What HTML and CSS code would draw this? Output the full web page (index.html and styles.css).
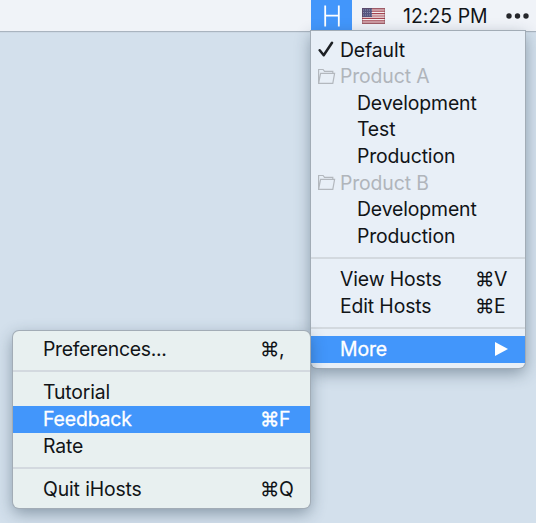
FILE: index.html
```
<!DOCTYPE html>
<html lang="en">
<head>
<meta charset="utf-8">
<title>iHosts</title>
<link rel="stylesheet" href="styles.css">
</head>
<body>
<header class="bar">
  <div class="app"><svg width="16" height="22" viewBox="0 0 16 22"><path d="M1.200 .5v21M14.800 .5v21M1.200 10.700h13.600" fill="none" stroke="#fff" stroke-width="1.800"/></svg></div>
  <svg class="flag" width="23" height="16" viewBox="0 0 23 16">
    <path fill="#f4eef0" d="M0 0h23v16H0z"/>
    <path d="M0 .8h23M0 3.200h23M0 5.600h23M0 8h23M0 10.400h23M0 12.800h23M0 15.200h23" stroke="#a34450" stroke-width="1.200"/>
    <path fill="#55557f" d="M0 0h10v9H0z"/>
    <path d="M1 2h9M1 4.500h9M1 7h9" stroke="#9c9cb9" stroke-width=".8" stroke-dasharray="1 1"/>
    <path d="M.4 .4h22.200v15.200H.4z" fill="none" stroke="#6c3543" stroke-opacity=".45" stroke-width=".8"/>
  </svg>
  <time class="clock">12:25 PM</time>
  <svg class="dots" width="24" height="6" viewBox="0 0 24 6" fill="#25272b"><circle cx="3" cy="3" r="2.700"/><circle cx="11.500" cy="3" r="2.700"/><circle cx="20" cy="3" r="2.700"/></svg>
</header>
<nav class="menu main">
  <div class="row"><svg class="lead" width="20" height="20" viewBox="0 0 20 20"><path d="M1.700 10.300l4 5L14 2.800" fill="none" stroke="#1d2024" stroke-width="2.500" stroke-linecap="round" stroke-linejoin="round"/></svg><span class="label">Default</span></div>
  <div class="row off"><svg class="lead" width="20" height="20" viewBox="0 0 20 20"><path d="M.6 16.400V2.500H5.100L6.500 4.300H14.800V6.300M.6 16.400L2.600 6.300H16.600L14.800 16.400Z" fill="none" stroke="#b3b8be" stroke-width="1.200"/></svg><span class="label">Product A</span></div>
  <div class="row sub"><span class="label">Development</span></div>
  <div class="row sub"><span class="label">Test</span></div>
  <div class="row sub"><span class="label">Production</span></div>
  <div class="row off"><svg class="lead" width="20" height="20" viewBox="0 0 20 20"><path d="M.6 16.400V2.500H5.100L6.500 4.300H14.800V6.300M.6 16.400L2.600 6.300H16.600L14.800 16.400Z" fill="none" stroke="#b3b8be" stroke-width="1.200"/></svg><span class="label">Product B</span></div>
  <div class="row sub"><span class="label">Development</span></div>
  <div class="row sub"><span class="label">Production</span></div>
  <div class="sep"></div>
  <div class="row"><span class="label">View Hosts</span><kbd><span class="cmd">⌘</span>V</kbd></div>
  <div class="row"><span class="label">Edit Hosts</span><kbd><span class="cmd">⌘</span>E</kbd></div>
  <div class="sep"></div>
  <div class="row on"><span class="label">More</span><svg class="arrow" width="13" height="14" viewBox="0 0 13 14"><path d="M0 0l13 7L0 14z" fill="#fff"/></svg></div>
</nav>
<nav class="menu more">
  <div class="row"><span class="label dotted">Preferences...</span><kbd><span class="cmd">⌘</span>,</kbd></div>
  <div class="sep"></div>
  <div class="row"><span class="label">Tutorial</span></div>
  <div class="row on"><span class="label">Feedback</span><kbd><span class="cmd">⌘</span>F</kbd></div>
  <div class="row"><span class="label">Rate</span></div>
  <div class="sep"></div>
  <div class="row"><span class="label">Quit iHosts</span><kbd><span class="cmd">⌘</span>Q</kbd></div>
</nav>
</body>
</html>
```
FILE: styles.css
```
* { box-sizing: border-box; }
body {
  margin: 0;
  height: 523px;
  overflow: hidden;
  position: relative;
  background: #d3e0ec;
  font: 19.4px/26.6px Inter, "Liberation Sans", sans-serif;
  letter-spacing: -.13px;
  color: #111417;
}
.bar {
  height: 31px;
  display: flex;
  align-items: center;
  padding-left: 311px;
  background: #f0f3f8;
  box-shadow: 0 1px 1px #a9b4bf;
}
.app {
  width: 41px;
  height: 31px;
  display: flex;
  align-items: center;
  justify-content: center;
  background: #4296fb;
}
.flag { margin-left: 10px; }
.clock { width: 87px; margin-left: 18px; padding-top: 1px; white-space: nowrap; letter-spacing: .05px; }
.dots { margin-left: 16px; flex: none; }
.menu {
  position: absolute;
  padding: 5.7px 0 0;
  box-shadow: 0 0 0 1px #a2acb6, 0 5px 16px rgba(40, 60, 80, .46);
}
.main {
  left: 311px;
  top: 31px;
  width: 214px;
  height: 337px;
  background: #e8eff7;
  border-radius: 0 0 6px 6px;
}
.more {
  left: 13px;
  top: 330.500px;
  width: 297px;
  height: 177.500px;
  background: #e8f0f0;
  border-radius: 6px;
}
.row {
  height: 26.6px;
  display: flex;
  align-items: center;
  position: relative;
  padding-left: 29px;
}
.more .row { padding-left: 30px; }
.main .sub { padding-left: 46px; }
.label { flex: 1; white-space: nowrap; }
.dotted { letter-spacing: -.3px; }
.lead { width: 20px; margin-left: -22px; margin-right: 2px; flex: none; }
.off { color: #b0b5bb; }
.on { background: #4296fb; color: #fff; -webkit-text-stroke: .3px #fff; }
kbd { width: 50px; font: inherit; display: flex; }
.cmd { width: 19px; }
.arrow { margin-right: 17px; }
.sep { height: 16.7px; display: flex; align-items: center; }
.sep::before { content: ""; height: 2px; flex: 1; background: #d3d9df; }
```
